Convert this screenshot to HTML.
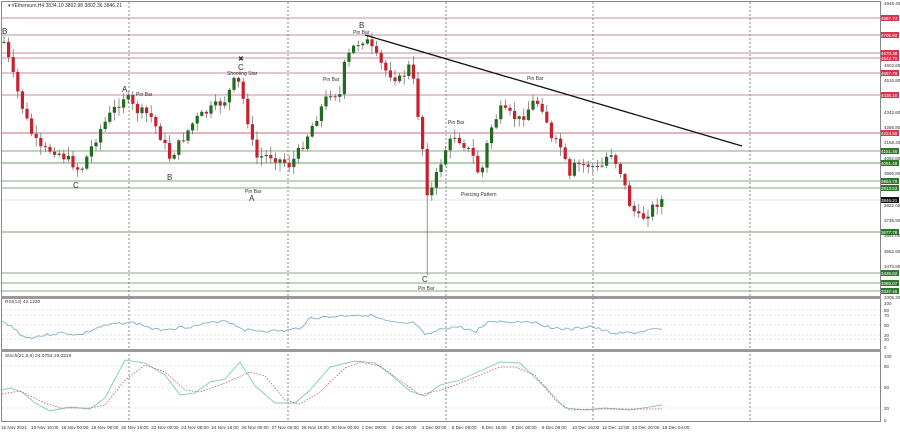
<!DOCTYPE html>
<html><head><meta charset="utf-8"><style>
html,body{margin:0;padding:0;background:#fff;width:900px;height:433px;overflow:hidden}
svg{display:block;font-family:"Liberation Sans",sans-serif}
</style></head><body>
<svg id="s" width="900" height="433" viewBox="0 0 900 433" xmlns="http://www.w3.org/2000/svg">
<rect width="900" height="433" fill="#fff"/>
<g id="grid"></g>
<g id="lines"></g>
<g id="candles"></g>
<g id="ind"></g>
<g id="txt" font-size="5.5" fill="#333"></g>
<rect x="1.5" y="1.5" width="879" height="420" fill="none" stroke="#888" stroke-width="1"/>
<rect x="1" y="296" width="880" height="3" fill="#999"/>
<rect x="1" y="349" width="880" height="3" fill="#999"/>
<line x1="365" y1="35" x2="742" y2="146" stroke="#111" stroke-width="1.3"/>
</svg>
<script>
var NS="http://www.w3.org/2000/svg";
function el(p,t,a,txt){var e=document.createElementNS(NS,t);for(var k in a)e.setAttribute(k,a[k]);if(txt!==undefined)e.textContent=txt;document.getElementById(p).appendChild(e);return e;}
[129,288,446,593,750].forEach(function(x){el("grid","line",{x1:x,y1:2,x2:x,y2:421,stroke:"#555","stroke-dasharray":"2,2","stroke-width":0.7});});
[310,315,325,335,339].forEach(function(y){el("grid","line",{x1:2,y1:y,x2:880,y2:y,stroke:"#ccc","stroke-dasharray":"2,2","stroke-width":0.5});});
[366,387,408].forEach(function(y){el("grid","line",{x1:2,y1:y,x2:880,y2:y,stroke:"#ccc","stroke-dasharray":"2,2","stroke-width":0.5});});
var red=[[18,"4867.74"],[35,"4705.92"],[53,"4670.38"],[58,"4642.71"],[73,"4557.78"],[95,"4435.10"],[133,"4234.50"]];
var grn=[[151,"4151.46"],[163,"4091.49"],[181,"3954.70"],[188,"3913.53"],[232,"3677.78"],[273,"3438.82"],[283,"3385.07"],[291,"3337.46"]];
red.forEach(function(r,i){el("lines","line",{x1:2,y1:r[0],x2:880,y2:r[0],stroke:i==6?"#e3b5bd":"#b36a78","stroke-width":i==6?2:0.8});
 el("lines","rect",{x:880,y:r[0]-3,width:19,height:6,fill:"#d8344d"});el("txt","text",{x:881,y:r[0]+1.8,fill:"#fff","font-size":4.5},r[1]);});
grn.forEach(function(r,i){var th=(r[0]==163||r[0]==232);el("lines","line",{x1:2,y1:r[0],x2:880,y2:r[0],stroke:th?"#b9cdb9":"#5d8f5d","stroke-width":th?2.2:0.8});
 el("lines","rect",{x:880,y:r[0]-3,width:19,height:6,fill:"#2b7a2b"});el("txt","text",{x:881,y:r[0]+1.8,fill:"#fff","font-size":4.5},r[1]);});
el("lines","line",{x1:2,y1:200,x2:880,y2:200,stroke:"#ddd","stroke-width":0.8});
el("lines","rect",{x:880,y:197,width:19,height:6,fill:"#111"});el("txt","text",{x:881,y:201.8,fill:"#fff","font-size":4.5},"3846.21");
[[3,"4948.40"],[65,"4602.60"],[80,"4516.80"],[112,"4342.60"],[127,"4256.80"],[142,"4168.40"],[158,"4082.60"],[173,"3996.80"],[205,"3822.00"],[220,"3736.80"],[235,"3651.00"],[251,"3562.60"],[266,"3476.80"],[297,"3305.20"]].forEach(function(p){el("txt","text",{x:884,y:p[0]+2,"font-size":4.5},p[1]);});
[[303,"100"],[310,"80"],[315,"70"],[325,"50"],[335,"30"],[339,"20"],[347,"0"]].forEach(function(p){el("txt","text",{x:884,y:p[0]+2,"font-size":4.5},p[1]);});
[[356,"100"],[366,"80"],[387,"50"],[408,"20"],[420,"0"]].forEach(function(p){el("txt","text",{x:884,y:p[0]+2,"font-size":4.5},p[1]);});
var K=[[4,42],[10,65],[20,100],[30,130],[40,150],[55,150],[75,165],[80,172],[90,150],[100,130],[110,115],[125,95],[135,110],[150,115],[160,135],[170,158],[185,135],[195,120],[210,110],[225,100],[235,80],[240,85],[250,130],[255,158],[270,155],[290,165],[300,150],[310,130],[320,110],[330,92],[340,95],[345,62],[355,45],[365,38],[375,55],[385,70],[400,80],[410,65],[415,90],[420,130],[425,165],[428,200],[435,180],[445,150],[455,135],[465,145],[475,160],[480,180],[490,130],[500,110],[510,115],[520,120],[535,100],[545,110],[550,140],[560,145],[570,180],[575,165],[590,165],[600,170],[610,150],[620,170],[630,205],[640,220],[650,210],[660,200]];
function py(x){for(var i=0;i<K.length-1;i++){if(x<=K[i+1][0]){var t=(x-K[i][0])/(K[i+1][0]-K[i][0]);return K[i][1]+t*(K[i+1][1]-K[i][1]);}}return K[K.length-1][1];}
var seed=7;function rnd(){seed=(seed*9301+49297)%233280;return seed/233280;}
var prev=py(4);
for(var x=4;x<=662;x+=4.6){var c=py(x)+(rnd()-0.5)*10;var o=prev;prev=c;
 var hi=Math.min(o,c)-rnd()*8-1,lo=Math.max(o,c)+rnd()*8+1;
 if(Math.abs(x-426)<2.4)lo=275;
 el("candles","line",{x1:x,y1:hi,x2:x,y2:lo,stroke:"#666","stroke-width":0.7});
 var up=c<o;el("candles","rect",{x:x-1.6,y:Math.min(o,c),width:3.2,height:Math.max(1,Math.abs(c-o)),fill:up?"#1f6b1f":"#c8202f"});}
var R=[[2,322],[10,325],[25,338],[40,336],[60,333],[80,335],[100,327],[126,322],[140,324],[155,330],[175,328],[195,326],[225,320],[245,330],[265,331],[285,331],[300,328],[310,318],[330,317],[350,315],[370,315],[385,321],[400,324],[415,323],[425,336],[445,328],[460,327],[475,332],[490,321],[510,322],[530,321],[550,327],[570,330],[590,326],[610,333],[635,333],[650,330],[662,330]];
var seed2=3;function r2(){seed2=(seed2*9301+49297)%233280;return seed2/233280;}
var RP=[];for(var x=2;x<=662;x+=3){var y;for(var i=0;i<R.length-1;i++){if(x<=R[i+1][0]){var t=(x-R[i][0])/(R[i+1][0]-R[i][0]);y=R[i][1]+t*(R[i+1][1]-R[i][1]);break;}}RP.push(x+","+(y+(r2()-0.5)*3).toFixed(1));}
el("ind","polyline",{points:RP.join(" "),fill:"none",stroke:"#7fb2c9","stroke-width":0.9});
var S=[[2,390],[10,388],[22,392],[35,403],[50,411],[70,407],[90,409],[105,398],[125,360],[145,363],[165,375],[180,395],[195,393],[210,382],[225,379],[240,362],[255,386],[275,403],[295,403],[310,390],[330,367],[355,361],[375,363],[390,374],[410,391],[425,396],[440,385],[460,380],[480,371],[500,362],[520,363],[545,387],[565,408],[585,410],[605,408],[630,410],[662,405]];
var D=[[2,394],[20,391],[45,403],[60,408],[90,408],[105,405],[125,380],[145,365],[165,372],[185,390],[200,392],[220,385],[250,372],[265,376],[285,400],[300,404],[320,392],[345,368],[360,362],[380,366],[405,384],[420,395],[445,389],[460,383],[480,375],[500,367],[515,367],[535,375],[555,400],[570,410],[600,409],[630,409],[662,409]];
el("ind","polyline",{points:S.map(function(p){return p.join(",")}).join(" "),fill:"none",stroke:"#7fc9c0","stroke-width":0.9});
el("ind","polyline",{points:D.map(function(p){return p.join(",")}).join(" "),fill:"none",stroke:"#c44b55","stroke-width":0.7,"stroke-dasharray":"1.5,1.5"});
el("txt","text",{x:8,y:7,"font-size":5},"▾ #Ethereum,H4  3834.10 3892.98 3802.36 3846.21");
el("txt","text",{x:5,y:303,"font-size":4.8},"RSI(14) 42.1220");
el("txt","text",{x:5,y:357,"font-size":4.8},"Stoch(21,8,8) 24.0754 19.0319");
var L=[[2,34,"B",8],[122,92,"A",8],[136,96,"Pin Bar",5],[238,61,"✖",7],[238,70,"C",8],[227,75,"Shooting Star",5],[73,188,"C",8],[167,180,"B",8],[245,193,"Pin Bar",5],[249,201,"A",8],[359,28,"B",8],[353,34,"Pin Bar",5],[323,81,"Pin Bar",5],[448,124,"Pin Bar",5],[461,196,"Piercing Pattern",5],[527,80,"Pin Bar",5],[422,282,"C",8],[418,290,"Pin Bar",5]];
L.forEach(function(l){el("txt","text",{x:l[0],y:l[1],"font-size":l[3]},l[2]);});
var DL=["15 Nov 2021","16 Nov 16:00","18 Nov 00:00","19 Nov 08:00","20 Nov 16:00","22 Nov 00:00","23 Nov 08:00","24 Nov 16:00","26 Nov 00:00","27 Nov 08:00","28 Nov 16:00","30 Nov 00:00","1 Dec 08:00","2 Dec 16:00","4 Dec 00:00","5 Dec 08:00","6 Dec 16:00","8 Dec 00:00","9 Dec 08:00","10 Dec 16:00","12 Dec 12:00","13 Dec 20:00","15 Dec 04:00"];
DL.forEach(function(d,i){el("txt","text",{x:1+i*30.05,y:429,"font-size":4.6},d);});
</script>
</body></html>
